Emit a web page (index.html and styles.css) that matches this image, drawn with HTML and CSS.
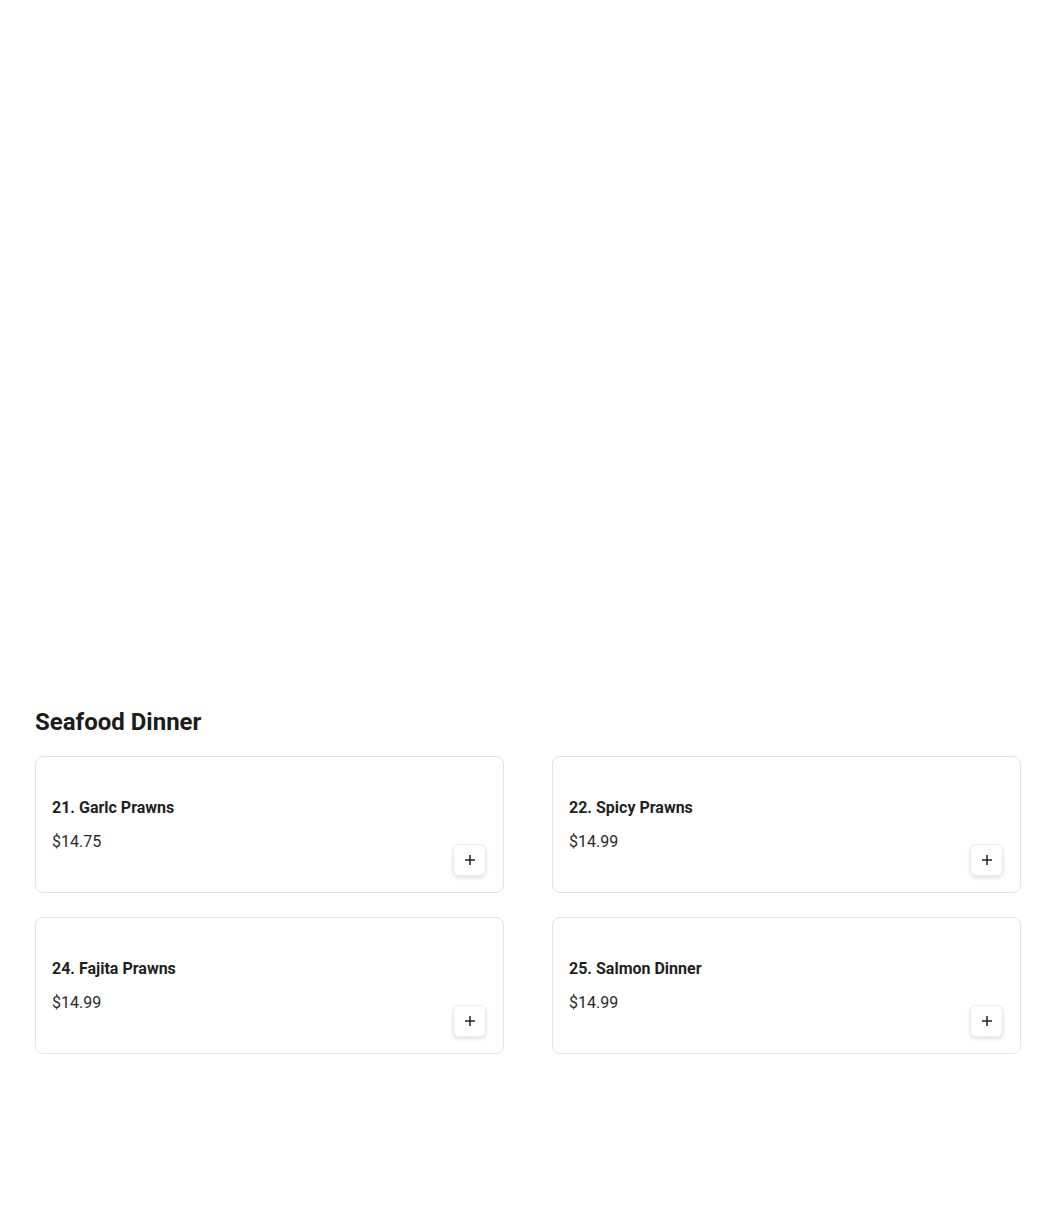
FILE: index.html
```html
<!DOCTYPE html>
<html lang="en">
<head>
<meta charset="utf-8">
<title>Seafood Dinner</title>
<link rel="stylesheet" href="styles.css">
</head>
<body>
<main class="page">
  <section class="category">
    <h2 class="category-title">Seafood Dinner</h2>
    <div class="grid">
      <div class="card">
        <div class="info">
          <div class="name">21. Garlc Prawns</div>
          <div class="price">$14.75</div>
        </div>
        <button class="add" aria-label="Add"><svg width="12" height="12" viewBox="0 0 12 12"><path d="M6 1v10M1 6h10" stroke="#222" stroke-width="1.5"/></svg></button>
      </div>
      <div class="card">
        <div class="info">
          <div class="name">22. Spicy Prawns</div>
          <div class="price">$14.99</div>
        </div>
        <button class="add" aria-label="Add"><svg width="12" height="12" viewBox="0 0 12 12"><path d="M6 1v10M1 6h10" stroke="#222" stroke-width="1.5"/></svg></button>
      </div>
      <div class="card">
        <div class="info">
          <div class="name">24. Fajita Prawns</div>
          <div class="price">$14.99</div>
        </div>
        <button class="add" aria-label="Add"><svg width="12" height="12" viewBox="0 0 12 12"><path d="M6 1v10M1 6h10" stroke="#222" stroke-width="1.5"/></svg></button>
      </div>
      <div class="card">
        <div class="info">
          <div class="name">25. Salmon Dinner</div>
          <div class="price">$14.99</div>
        </div>
        <button class="add" aria-label="Add"><svg width="12" height="12" viewBox="0 0 12 12"><path d="M6 1v10M1 6h10" stroke="#222" stroke-width="1.5"/></svg></button>
      </div>
    </div>
  </section>
</main>
</body>
</html>
```
FILE: styles.css
```css
html, body {
  margin: 0;
  background: #fff;
}
body {
  font-family: Roboto, "Liberation Sans", Arial, sans-serif;
  color: #1f1f1f;
}
.page {
  padding: 706px 29px 0 35px;
}
.category-title {
  margin: 0 0 18px;
  font-size: 24px;
  line-height: 32px;
  font-weight: 700;
  color: #1c1c1c;
}
.grid {
  display: grid;
  grid-template-columns: 1fr 1fr;
  column-gap: 48px;
  row-gap: 24px;
}
.card {
  display: flex;
  justify-content: space-between;
  align-items: flex-end;
  border: 1px solid #e4e4e4;
  border-radius: 8px;
  padding: 16px;
  background: #fff;
}
.info {
  padding: 23px 0 22px;
}
.name {
  font-size: 16px;
  line-height: 24px;
  font-weight: 700;
  color: #1f1f1f;
}
.price {
  margin-top: 10px;
  font-size: 16px;
  line-height: 24px;
  color: #2a2a2a;
}
.add {
  width: 33px;
  height: 32px;
  margin-right: 1px;
  display: flex;
  align-items: center;
  justify-content: center;
  padding: 0;
  background: #fff;
  border: 1px solid #ececec;
  border-radius: 6px;
  box-shadow: 0 2px 4px rgba(0,0,0,0.12);
  cursor: pointer;
}
```
